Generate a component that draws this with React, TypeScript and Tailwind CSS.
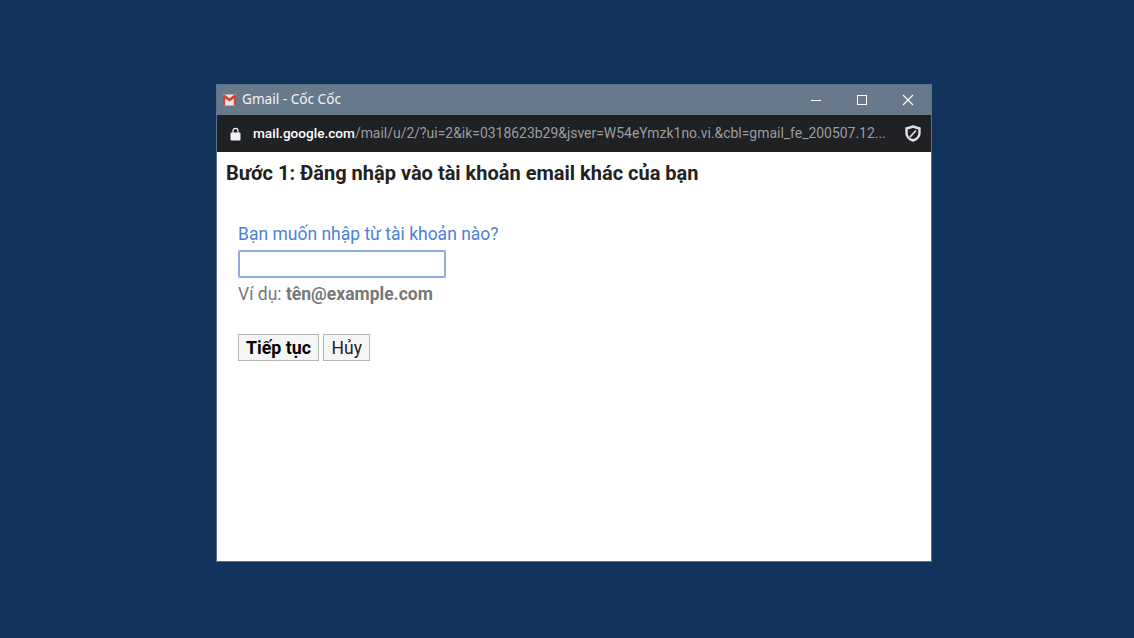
export default function App() {
  return (
    <div className="h-[638px] bg-[#12335c] pt-[84px] pl-[216px] font-['Roboto',sans-serif]">
      <div className="w-[716px] h-[478px] flex flex-col border border-[#5d7089] bg-white">
        {/* title bar */}
        <div className="h-[30px] flex items-center bg-[#68798b] pl-[6px]">
          <svg width="13" height="12" viewBox="0 0 13 11" className="shrink-0">
            <rect width="13" height="11" rx="1" fill="#eee5e3" />
            <path d="M0 1 V11 H2.2 V4 L6.5 7 L10.8 4 V11 H13 V1 L11.5 0 L6.5 3.8 L1.5 0 Z" fill="#c9453a" />
          </svg>
          <span className="ml-[6px] mb-[2px] flex-1 font-['Noto_Sans',sans-serif] text-[13.6px] text-[#f1f3f5]">Gmail - Cốc Cốc</span>
          <div className="flex items-center">
            <div className="w-[46px] h-[30px] flex items-center justify-center">
              <div className="w-[10px] h-px bg-white" />
            </div>
            <div className="w-[46px] h-[30px] flex items-center justify-center">
              <div className="w-[10px] h-[10px] border border-white" />
            </div>
            <div className="w-[46px] h-[30px] flex items-center justify-center">
              <svg width="12" height="12" viewBox="0 0 12 12" stroke="white" strokeWidth="1.1" fill="none">
                <path d="M1 1 L11 11 M11 1 L1 11" />
              </svg>
            </div>
          </div>
        </div>
        {/* address bar */}
        <div className="h-[37px] flex items-center bg-[#202124] pl-[13px] pr-[10px]">
          <svg width="11" height="14" viewBox="0 0 11 14" fill="#f1f3f4" className="shrink-0">
            <path d="M1.5 5.5 H9.5 A1 1 0 0 1 10.5 6.5 V12.5 A1 1 0 0 1 9.5 13.5 H1.5 A1 1 0 0 1 .5 12.5 V6.5 A1 1 0 0 1 1.5 5.5 Z" />
            <path d="M3 6 V3.8 A2.5 2.5 0 0 1 8 3.8 V6" fill="none" stroke="#f1f3f4" strokeWidth="1.2" />
          </svg>
          <div className="ml-[12px] w-[640px] whitespace-nowrap overflow-hidden text-[13.95px] text-[#9a9da0]">
            <span className="text-white font-medium text-[13.6px]">mail.google.com</span>/mail/u/2/?ui=2&amp;ik=0318623b29&amp;jsver=W54eYmzk1no.vi.&amp;cbl=gmail_fe_200507.12...
          </div>
          <svg width="16" height="17" viewBox="0 0 16 17" fill="none" stroke="#dfe1e3" strokeWidth="2.4" className="ml-auto shrink-0">
            <path d="M8 1.5 L14.5 3.5 V8 C14.5 11.5 11.5 14.5 8 15.5 C4.5 14.5 1.5 11.5 1.5 8 V3.5 Z" />
            <path d="M11 5.5 L5 12" strokeWidth="1.8" />
          </svg>
        </div>
        {/* page */}
        <div className="flex-1 pl-[9px] pt-[7px]">
          <h1 className="text-[20px] leading-[28px] font-bold text-[#222]">Bước 1: Đăng nhập vào tài khoản email khác của bạn</h1>
          <div className="pl-[12px] pt-[34px]">
            <div className="text-[17.5px] leading-[26px] text-[#4f80d8]">Bạn muốn nhập từ tài khoản nào?</div>
            <input className="block mt-[3px] w-[208px] h-[28px] border-2 border-[#8dabdd] rounded-[2px] bg-white outline-none" />
            <div className="mt-[3px] text-[17.5px] leading-[26px] text-[#777]">
              Ví dụ: <b className="font-bold">tên@example.com</b>
            </div>
            <div className="mt-[27px] flex gap-[4px]">
              <button className="h-[27px] px-[7px] border border-[#b5b5b5] bg-[#f5f5f5] text-[17.8px] font-bold text-black">Tiếp tục</button>
              <button className="h-[27px] px-[7.5px] border border-[#b5b5b5] bg-[#f5f5f5] text-[17.5px] text-[#222]">Hủy</button>
            </div>
          </div>
        </div>
      </div>
    </div>
  );
}
